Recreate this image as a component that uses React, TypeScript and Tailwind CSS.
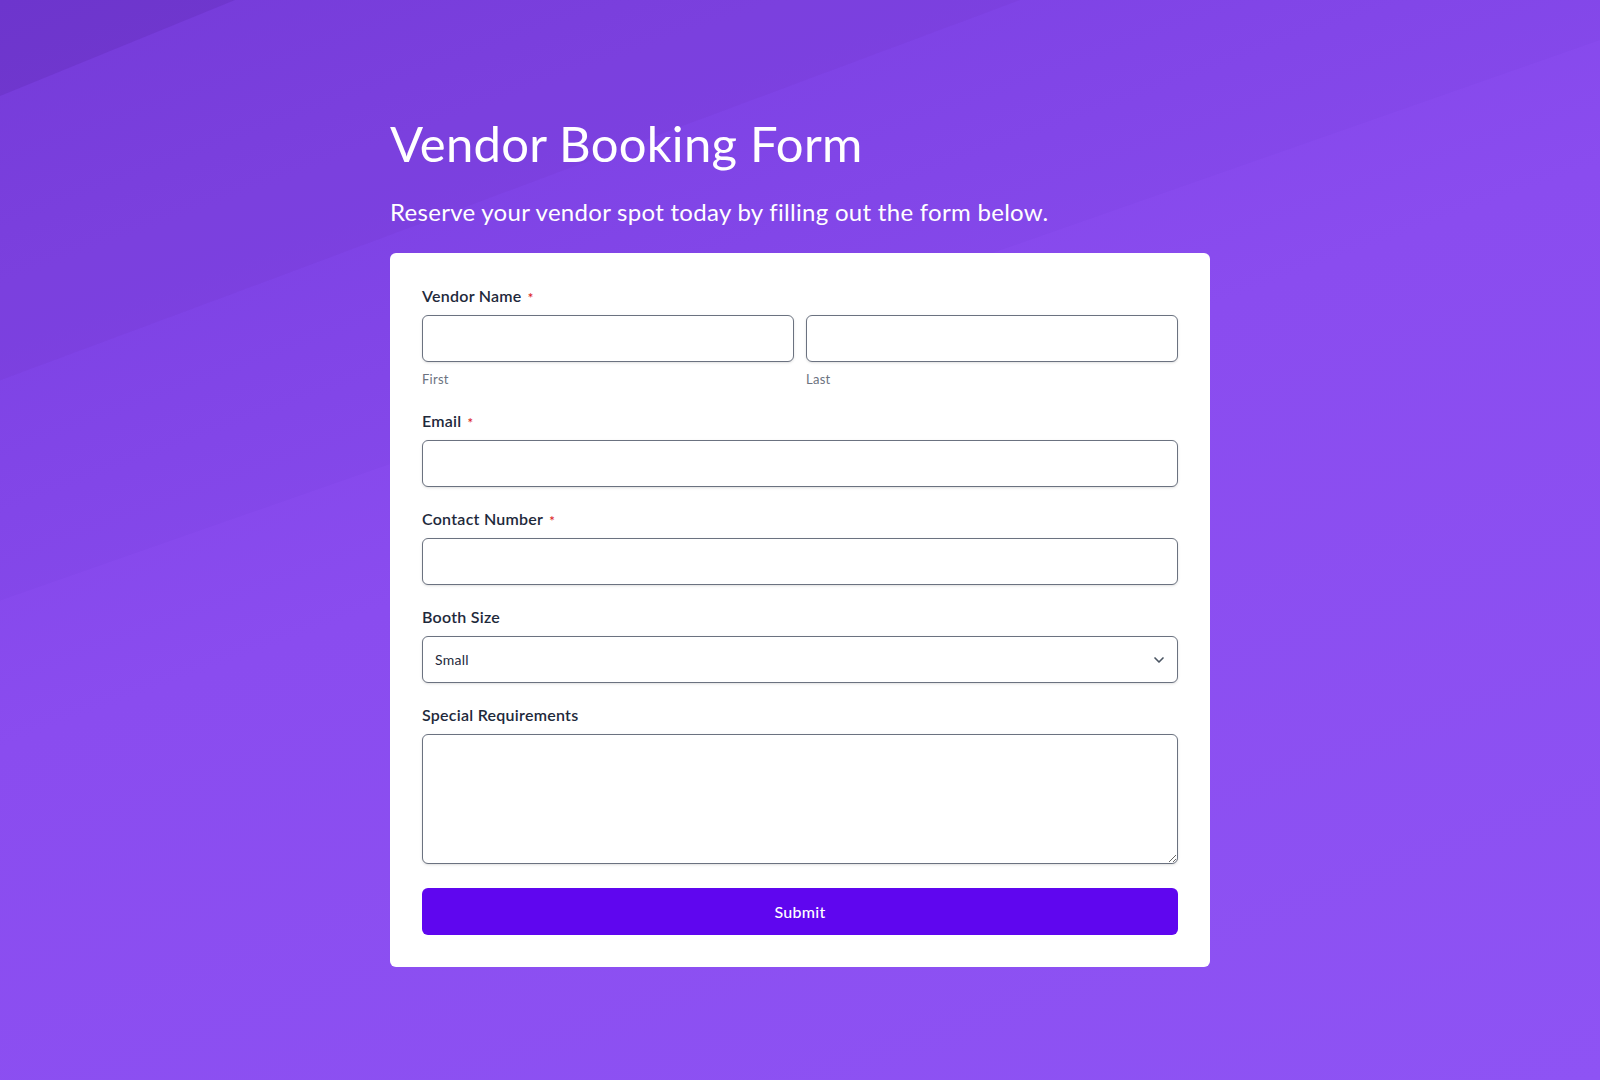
import { ChevronDown } from "lucide-react";

function Label({ text, required }: { text: string; required?: boolean }) {
  return (
    <label className="mb-[7px] flex items-center text-base leading-6 font-semibold text-[#1e293b]">
      {text}
      {required && (
        <span className="relative top-[2px] ml-1.5 text-[13px] leading-none text-[#dc2626]">*</span>
      )}
    </label>
  );
}

const inputCls =
  "block h-[47px] w-full rounded-md border border-[#6b7280] bg-white px-3 text-sm text-[#1e293b] shadow-sm outline-none";

export default function App() {
  return (
    <div className="relative min-h-screen overflow-hidden bg-[linear-gradient(160deg,#7a3fe2_0%,#8a4cef_45%,#8e53f4_100%)] font-[Lato,'Liberation_Sans',sans-serif] tracking-[0.016em]">
      <svg
        className="absolute inset-0 h-full w-full"
        viewBox="0 0 1600 1080"
        preserveAspectRatio="none"
      >
        <polygon points="0,0 1020,0 0,380" fill="#4c1d95" fillOpacity="0.1" />
        <polygon points="0,0 235,0 0,96" fill="#4c1d95" fillOpacity="0.18" />
        <polygon points="0,380 1020,0 1600,0 1600,40 0,600" fill="#4c1d95" fillOpacity="0.03" />
      </svg>

      <div className="relative mx-auto w-[820px] pt-[114px] pb-[114px]">
        <h1 className="text-[49px] leading-[58px] font-normal text-white">Vendor Booking Form</h1>
        <p className="mt-[26px] text-[24px] leading-[28px] tracking-[0.012em] text-white">
          Reserve your vendor spot today by filling out the form below.
        </p>

        <form className="mt-[27px] flex flex-col gap-5 rounded-md bg-white px-8 pt-[31px] pb-8">
          <div>
            <Label text="Vendor Name" required />
            <div className="grid grid-cols-2 gap-3">
              <div>
                <input className={inputCls} />
                <div className="mt-[7px] text-[13px] leading-5 text-[#6b7280]">First</div>
              </div>
              <div>
                <input className={inputCls} />
                <div className="mt-[7px] text-[13px] leading-5 text-[#6b7280]">Last</div>
              </div>
            </div>
          </div>

          <div>
            <Label text="Email" required />
            <input className={inputCls} />
          </div>

          <div>
            <Label text="Contact Number" required />
            <input className={inputCls} />
          </div>

          <div>
            <Label text="Booth Size" />
            <div className="relative">
              <select className={inputCls + " appearance-none"} defaultValue="Small">
                <option>Small</option>
                <option>Medium</option>
                <option>Large</option>
              </select>
              <ChevronDown
                className="pointer-events-none absolute top-1/2 right-[11px] -translate-y-1/2 text-[#4b5563]"
                size={16}
                strokeWidth={2.5}
              />
            </div>
          </div>

          <div>
            <Label text="Special Requirements" />
            <textarea className="block h-[130px] w-full rounded-md border border-[#6b7280] bg-white px-3 py-2 text-sm shadow-sm outline-none" />
          </div>

          <button
            type="button"
            className="mt-1 h-[47px] w-full rounded-md bg-[#5f06ef] text-base font-medium text-white"
          >
            Submit
          </button>
        </form>
      </div>
    </div>
  );
}
